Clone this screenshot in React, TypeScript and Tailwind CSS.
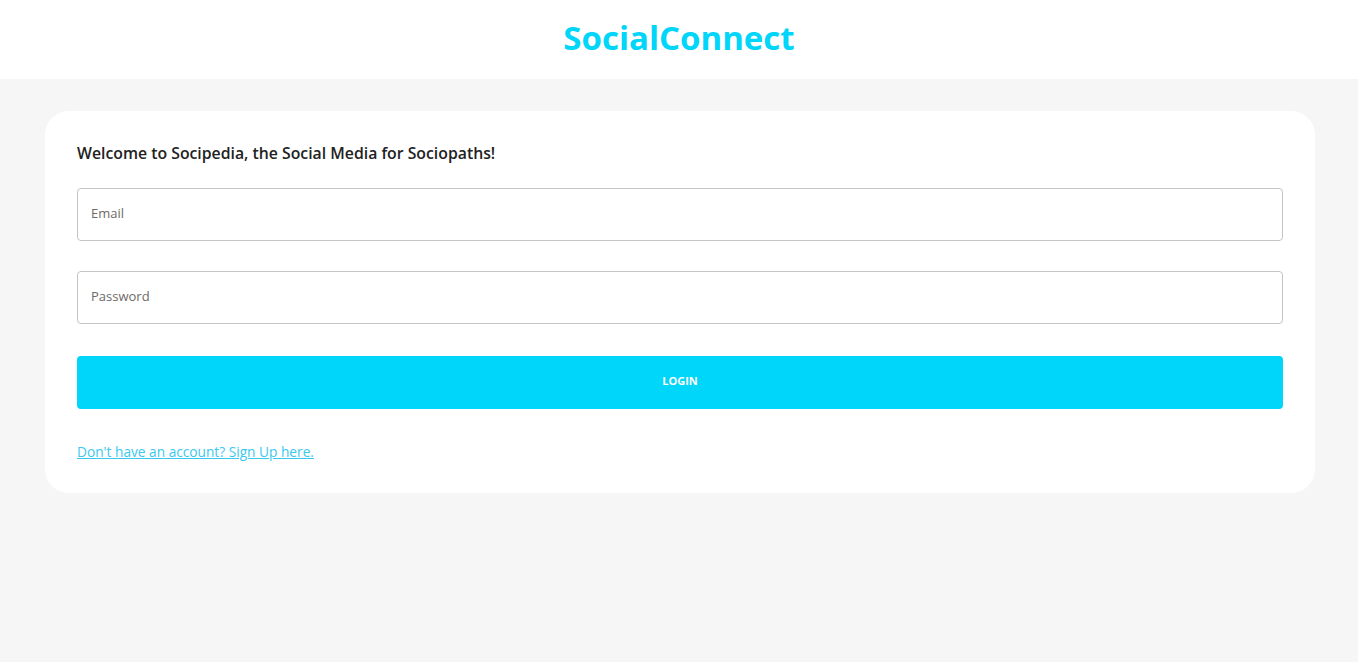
export default function App() {
  return (
    <div className="min-h-[662px] bg-[#f6f6f6] font-['Open_Sans',sans-serif]">
      {/* Top bar */}
      <header className="flex h-[79px] items-center justify-center bg-white pb-[3px]">
        <h1 className="text-[33px] font-bold text-[#00d5fa]">SocialConnect</h1>
      </header>

      {/* Login card */}
      <div className="ml-[45px] mt-8 w-[1270px] rounded-3xl bg-white px-8 pt-[31px] pb-[30px]">
        <p className="text-[15.8px] font-semibold text-[#222]">Welcome to Socipedia, the Social Media for Sociopaths!</p>

        <form className="mt-[22px] flex flex-col" onSubmit={(e) => e.preventDefault()}>
          <input
            type="text"
            placeholder="Email"
            className="h-[53px] rounded border border-[#c4c4c4] px-[13px] pb-[3px] text-[13px] text-[#333] outline-none placeholder:text-[#6e6a68]"
          />
          <input
            type="password"
            placeholder="Password"
            className="mt-[30px] h-[53px] rounded border border-[#c4c4c4] px-[13px] pb-[3px] text-[13px] text-[#333] outline-none placeholder:text-[#6e6a68]"
          />
          <button
            type="submit"
            className="mt-8 h-[53px] rounded bg-[#00d5fa] pb-[2px] text-[11px] font-bold text-white"
          >
            LOGIN
          </button>
        </form>

        <a href="#" className="mt-[33px] inline-block text-[13.7px] text-[#3ac8ef] underline">
          Don't have an account? Sign Up here.
        </a>
      </div>
    </div>
  );
}
